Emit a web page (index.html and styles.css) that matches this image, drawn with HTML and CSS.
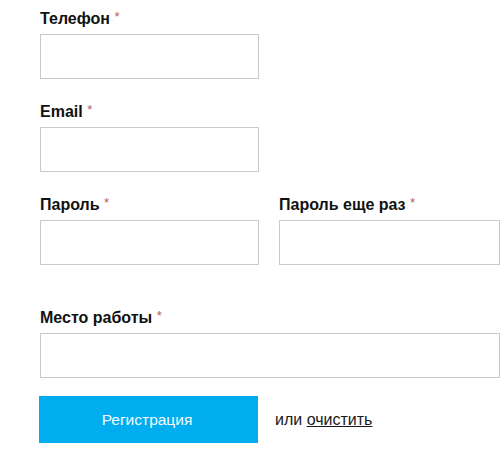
FILE: index.html
```html
<!DOCTYPE html>
<html lang="ru">
<head>
<meta charset="utf-8">
<title>Регистрация</title>
<link rel="stylesheet" href="styles.css">
</head>
<body>
<form class="form">
  <div class="field">
    <label class="label">Телефон <span class="req">*</span></label>
    <input class="input" type="text">
  </div>
  <div class="field">
    <label class="label">Email <span class="req">*</span></label>
    <input class="input" type="text">
  </div>
  <div class="row">
    <div class="field">
      <label class="label">Пароль <span class="req">*</span></label>
      <input class="input" type="password">
    </div>
    <div class="field">
      <label class="label">Пароль еще раз <span class="req">*</span></label>
      <input class="input input-fill" type="password">
    </div>
  </div>
  <div class="field field-spaced">
    <label class="label">Место работы <span class="req">*</span></label>
    <input class="input input-wide" type="text">
  </div>
  <div class="actions">
    <button class="btn" type="button">Регистрация</button>
    <span class="alt">или <a class="clear" href="#">очистить</a></span>
  </div>
</form>
</body>
</html>
```
FILE: styles.css
```css
html, body {
  margin: 0;
  padding: 0;
  background: #ffffff;
}
body {
  font-family: "Liberation Sans", Arial, sans-serif;
  color: #111111;
}
.form {
  padding: 10px 0 0 40px;
  width: 460px;
}
.field {
  margin-bottom: 24px;
}
.label {
  display: block;
  font-size: 16px;
  font-weight: bold;
  line-height: 18px;
  margin-bottom: 6px;
  color: #111111;
}
.req {
  font-weight: normal;
  color: #b55a62;
  font-size: 13px;
  vertical-align: 3px;
  line-height: 0;
}
.input {
  display: block;
  box-sizing: border-box;
  width: 219px;
  height: 45px;
  margin: 0;
  border: 1px solid #c9c9c9;
  background: #ffffff;
  outline: none;
}
.input-fill {
  width: 221px;
}
.input-wide {
  width: 460px;
}
.row {
  display: grid;
  grid-template-columns: 219px 221px;
  column-gap: 20px;
}
.field-spaced {
  margin-top: 20px;
  margin-bottom: 18px;
}
.actions {
  display: flex;
  align-items: center;
}
.btn {
  width: 219px;
  height: 47px;
  margin-left: -1px;
  border: none;
  background: #00adef;
  color: #f4fbff;
  font-family: "Liberation Sans", Arial, sans-serif;
  font-size: 15.5px;
  padding: 0 3px 0 0;
  cursor: pointer;
}
.alt {
  margin-left: 17px;
  font-size: 16px;
  color: #1a1a1a;
}
.clear {
  color: #1a1a1a;
  text-decoration: underline;
}
```
